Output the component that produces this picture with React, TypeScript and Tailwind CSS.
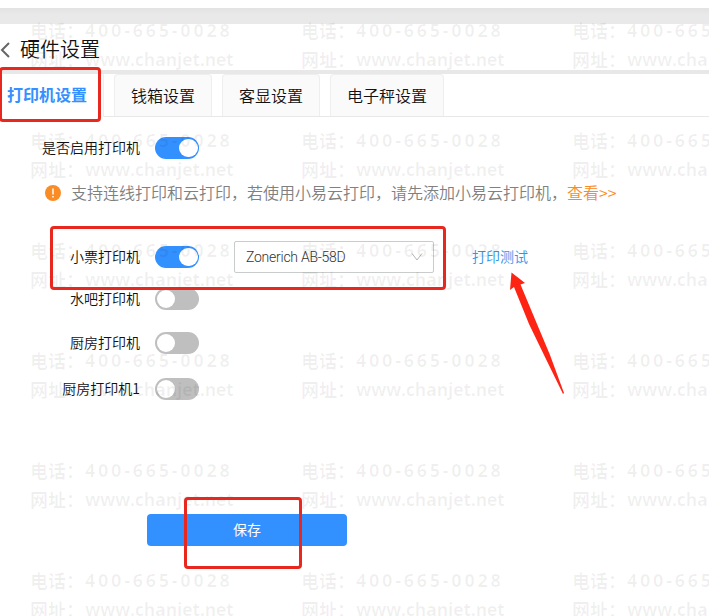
import clsx from "clsx";

const tabs = ["钱箱设置", "客显设置", "电子秤设置"];

const otherPrinters = [
    { name: "水吧打印机", row: "mt-[15px]" },
    { name: "厨房打印机", row: "mt-[22px]" },
    { name: "厨房打印机1", row: "mt-[24px]" },
];

const marks = Array.from({ length: 18 }, (_, i) => i);

function Toggle({ on = false }: { on?: boolean }) {
    return (
        <span
            role="switch"
            aria-checked={on}
            className={clsx(
                "ml-[15px] flex h-[22px] w-11 shrink-0 items-center rounded-full",
                on ? "justify-end bg-[#3390ff] pr-[1.5px]" : "justify-start bg-[#bfbfbf] pl-[1.5px]"
            )}
        >
            <span className="h-[18.5px] w-[18.5px] rounded-full bg-white" />
        </span>
    );
}

function Label({ children }: { children: string }) {
    return (
        <span className="w-[140px] shrink-0 pb-[2px] text-right text-sm leading-5 text-[#111]">{children}</span>
    );
}

function Watermark() {
    return (
        <div className="pointer-events-none absolute left-[30px] top-4 grid grid-cols-[repeat(3,271px)] text-[18px] font-semibold text-black/[0.06]">
            {marks.map((mark) => (
                <div key={mark} className="h-[110px] whitespace-nowrap">
                    <div className="flex h-[29px] items-center">
                        <span className="w-[55px]">电话：</span>
                        <span className="font-['Open_Sans'] font-bold tracking-[2.75px]">400-665-0028</span>
                    </div>
                    <div className="flex h-[29px] items-center">
                        <span className="w-[55px]">网址：</span>
                        <span className="font-['Open_Sans'] font-bold tracking-[-0.4px]">www.chanjet.net</span>
                    </div>
                </div>
            ))}
        </div>
    );
}

export default function App() {
    return (
        <div className="relative h-[616px] w-[709px] overflow-hidden bg-white pt-2 font-['Noto_Sans_CJK_SC',sans-serif] font-[350]">
            <div className="h-4 bg-gradient-to-b from-[#e2e2e2] to-[#e9e9e9] to-40%" />

            <header className="flex h-[46px] items-center pt-[5px]">
                <svg className="h-4 w-[10px]" viewBox="0 0 10 16" fill="none">
                    <path d="M9 1 2 8l7 7" stroke="#666" strokeWidth="2" />
                </svg>
                <h1 className="ml-[10px] pb-[2px] text-[20px] leading-6 text-[#111]">硬件设置</h1>
            </header>
            <div className="h-1 bg-[#e8e8e8]" />

            <nav className="flex h-[43px] gap-[10px] border-b border-[#e8e8e8] text-base">
                <div className="-mb-px flex w-[104px] items-center border-r border-[#eee] bg-white pb-[3px] pl-[7px] font-bold text-[#3390ff]">
                    打印机设置
                </div>
                {tabs.map((tab) => (
                    <div
                        key={tab}
                        className="flex items-center rounded-t-sm border-x border-t border-[#eee] bg-[#fafafa] px-4 pb-[2px] text-[#111]"
                    >
                        {tab}
                    </div>
                ))}
            </nav>

            <main>
                <div className="mt-5 flex items-center">
                    <Label>是否启用打印机</Label>
                    <Toggle on />
                </div>

                <div className="mt-[22px] flex h-6 items-center pl-[45px] text-base text-[#808080]">
                    <svg className="mr-[10px] h-4 w-4" viewBox="0 0 16 16">
                        <circle cx="8" cy="8" r="8" fill="#fa8c25" />
                        <path d="M8 3.5v6M8 11v1.5" stroke="#fff" strokeWidth="1.5" />
                    </svg>
                    <span className="pb-[2px]">支持连线打印和云打印，若使用小易云打印，请先添加小易云打印机，</span>
                    <a className="pb-[2px] text-[#fa8c25]">查看&gt;&gt;</a>
                </div>

                <div className="mt-9 flex h-8 items-center">
                    <Label>小票打印机</Label>
                    <Toggle on />
                    <div className="ml-[35px] flex h-8 w-[200px] items-center justify-between rounded-[2px] border border-[#c8cccb] pl-[11px] pr-[10px]">
                        <span className="pb-px font-[Roboto] text-sm font-[350] tracking-[-0.25px] text-[#333]">
                            Zonerich AB-58D
                        </span>
                        <svg className="h-[8px] w-[12px]" viewBox="0 0 12 8" fill="none">
                            <path d="M1 .5 6 7l5-6.5" stroke="#b5b5b5" />
                        </svg>
                    </div>
                    <a className="ml-[38px] pb-[2px] text-sm text-[#2f96ee]">打印测试</a>
                </div>

                {otherPrinters.map((printer) => (
                    <div key={printer.name} className={clsx("flex items-center", printer.row)}>
                        <Label>{printer.name}</Label>
                        <Toggle />
                    </div>
                ))}

                <button className="ml-[147px] mt-[114px] block h-8 w-[200px] rounded-[4px] bg-[#3390ff] pb-[2px] text-sm font-normal text-white">
                    保存
                </button>
            </main>

            <Watermark />

            {/* callouts drawn over the form */}
            <div className="absolute left-[-1px] top-[67px] h-[55px] w-[102px] rounded-[4px] border-[3px] border-[#e8281e]" />
            <div className="absolute left-[50px] top-[226px] h-[64px] w-[396px] rounded-[4px] border-[3px] border-[#e8281e]" />
            <div className="absolute left-[184px] top-[497px] h-[72px] w-[118px] rounded-[4px] border-[3px] border-[#e8281e]" />
            <svg className="absolute left-[508px] top-[271px] h-[125px] w-[60px]" viewBox="0 0 60 125">
                <path d="M3.5 1.5 17 12 12.500 13.500 29 53 42 84 56 122 55 123 36 84 21 53 6 16 2 19Z" fill="#fd2413" />
            </svg>
        </div>
    );
}
